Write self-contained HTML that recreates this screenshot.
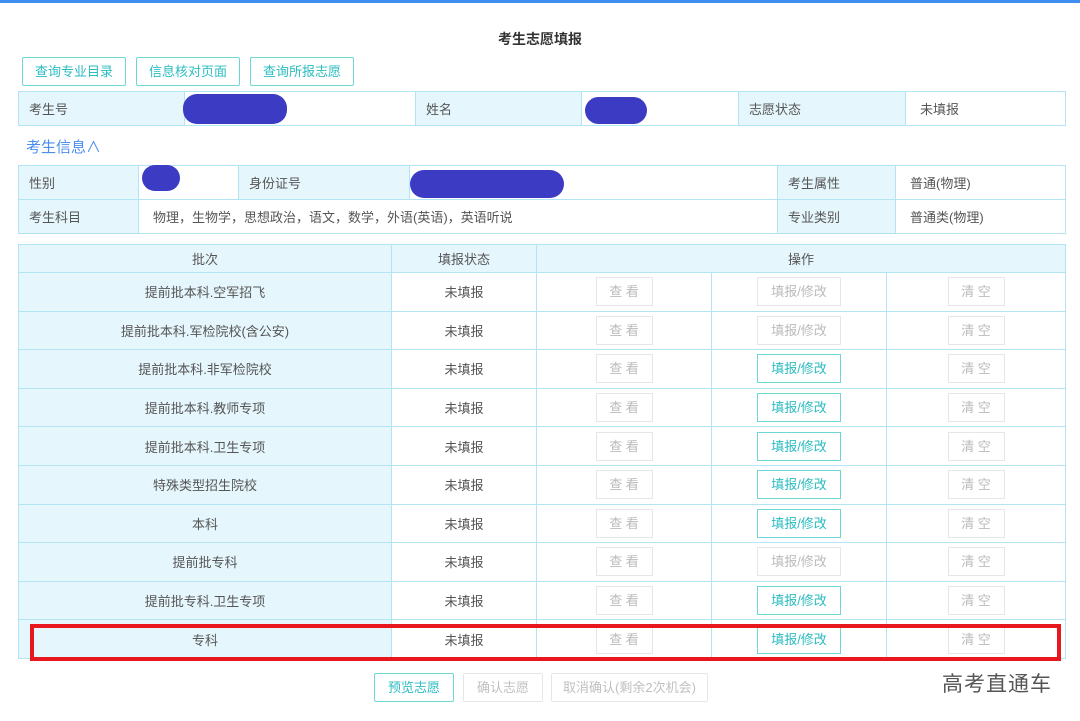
<!DOCTYPE html><html><head><meta charset="utf-8"><style>
body{margin:0;width:1080px;height:721px;background:#fff;position:relative;overflow:hidden;font-family:"Liberation Sans","Noto Sans CJK SC",sans-serif;font-size:13px;color:#555}
.a{position:absolute;box-sizing:border-box}
.top{left:0;top:0;width:1080px;height:3px;background:#3d8ef0}
.btn{border:1px solid #6fd6d6;color:#2bbcc0;background:#fff;text-align:center;border-radius:2px;font-size:13px}
.dis{border:1px solid #e6e6e6;color:#c0c0c0}
table{border-collapse:collapse;position:absolute;table-layout:fixed}
td{border:1px solid #b3e4f3;padding:0 0 0 10px;font-size:13px;color:#555}
.l{background:#e5f6fd}
.t3 td{text-align:center;padding:0}
.b{display:inline-block;box-sizing:border-box;height:29px;line-height:27px;border:1px solid #e6e6e6;color:#bbb;font-size:13px;background:#fff}
.b.on{border-color:#6fd6d6;color:#2bbcc0}
.blob{position:absolute;background:#3b3bc4;border-radius:14px}
</style></head><body>
<div class="a top"></div>
<div class="a" style="left:0;width:1080px;top:29px;text-align:center;font-weight:bold;font-size:14px;color:#333">考生志愿填报</div>
<div class="a btn" style="left:22px;top:57px;width:104px;height:29px;line-height:27px">查询专业目录</div>
<div class="a btn" style="left:136px;top:57px;width:104px;height:29px;line-height:27px">信息核对页面</div>
<div class="a btn" style="left:250px;top:57px;width:104px;height:29px;line-height:27px">查询所报志愿</div>
<table style="left:18px;top:91px;width:1047px;height:35px">
<colgroup><col style="width:166px"><col style="width:231px"><col style="width:166px"><col style="width:157px"><col style="width:167px"><col style="width:160px"></colgroup>
<tr><td class="l">考生号</td><td></td><td class="l">姓名</td><td></td><td class="l">志愿状态</td><td style="padding-left:14px">未填报</td></tr></table>
<div class="blob" style="left:183px;top:94px;width:104px;height:30px"></div>
<div class="blob" style="left:585px;top:97px;width:62px;height:27px"></div>
<div class="a" style="left:26px;top:136px;color:#4b8df0;font-size:15px">考生信息∧</div>
<table style="left:18px;top:165px;width:1047px;height:69px">
<colgroup><col style="width:120px"><col style="width:100px"><col style="width:171px"><col style="width:368px"><col style="width:118px"><col style="width:170px"></colgroup>
<tr style="height:34px"><td class="l">性别</td><td></td><td class="l">身份证号</td><td></td><td class="l">考生属性</td><td style="padding-left:14px">普通(物理)</td></tr>
<tr style="height:34px"><td class="l">考生科目</td><td colspan="3" style="padding-left:14px">物理，生物学，思想政治，语文，数学，外语(英语)，英语听说</td><td class="l">专业类别</td><td style="padding-left:14px">普通类(物理)</td></tr></table>
<div class="blob" style="left:142px;top:165px;width:38px;height:26px"></div>
<div class="blob" style="left:410px;top:170px;width:154px;height:28px"></div>
<table class="t3" style="left:18px;top:244px;width:1047px">
<colgroup><col style="width:373px"><col style="width:145px"><col style="width:175px"><col style="width:175px"><col style="width:179px"></colgroup>
<tr style="height:28px" class="l"><td class="l">批次</td><td class="l">填报状态</td><td class="l" colspan="3">操作</td></tr>
<tr style="height:38.6px"><td class="l">提前批本科.空军招飞</td><td>未填报</td><td><span class="b" style="width:57px">查 看</span></td><td><span class="b" style="width:84px">填报/修改</span></td><td><span class="b" style="width:57px">清 空</span></td></tr>
<tr style="height:38.6px"><td class="l">提前批本科.军检院校(含公安)</td><td>未填报</td><td><span class="b" style="width:57px">查 看</span></td><td><span class="b" style="width:84px">填报/修改</span></td><td><span class="b" style="width:57px">清 空</span></td></tr>
<tr style="height:38.6px"><td class="l">提前批本科.非军检院校</td><td>未填报</td><td><span class="b" style="width:57px">查 看</span></td><td><span class="b on" style="width:84px">填报/修改</span></td><td><span class="b" style="width:57px">清 空</span></td></tr>
<tr style="height:38.6px"><td class="l">提前批本科.教师专项</td><td>未填报</td><td><span class="b" style="width:57px">查 看</span></td><td><span class="b on" style="width:84px">填报/修改</span></td><td><span class="b" style="width:57px">清 空</span></td></tr>
<tr style="height:38.6px"><td class="l">提前批本科.卫生专项</td><td>未填报</td><td><span class="b" style="width:57px">查 看</span></td><td><span class="b on" style="width:84px">填报/修改</span></td><td><span class="b" style="width:57px">清 空</span></td></tr>
<tr style="height:38.6px"><td class="l">特殊类型招生院校</td><td>未填报</td><td><span class="b" style="width:57px">查 看</span></td><td><span class="b on" style="width:84px">填报/修改</span></td><td><span class="b" style="width:57px">清 空</span></td></tr>
<tr style="height:38.6px"><td class="l">本科</td><td>未填报</td><td><span class="b" style="width:57px">查 看</span></td><td><span class="b on" style="width:84px">填报/修改</span></td><td><span class="b" style="width:57px">清 空</span></td></tr>
<tr style="height:38.6px"><td class="l">提前批专科</td><td>未填报</td><td><span class="b" style="width:57px">查 看</span></td><td><span class="b" style="width:84px">填报/修改</span></td><td><span class="b" style="width:57px">清 空</span></td></tr>
<tr style="height:38.6px"><td class="l">提前批专科.卫生专项</td><td>未填报</td><td><span class="b" style="width:57px">查 看</span></td><td><span class="b on" style="width:84px">填报/修改</span></td><td><span class="b" style="width:57px">清 空</span></td></tr>
<tr style="height:38.6px"><td class="l">专科</td><td>未填报</td><td><span class="b" style="width:57px">查 看</span></td><td><span class="b on" style="width:84px">填报/修改</span></td><td><span class="b" style="width:57px">清 空</span></td></tr>
</table>
<div class="a" style="left:30px;top:624px;width:1031px;height:37px;border:4px solid #e8161d"></div>
<div class="a btn" style="left:374px;top:673px;width:80px;height:29px;line-height:27px">预览志愿</div>
<div class="a btn dis" style="left:463px;top:673px;width:80px;height:29px;line-height:27px">确认志愿</div>
<div class="a btn dis" style="left:551px;top:673px;width:157px;height:29px;line-height:27px">取消确认(剩余2次机会)</div>
<div class="a" style="left:942px;top:668px;font-size:21px;letter-spacing:1px;color:#555">高考直通车</div>
</body></html>
